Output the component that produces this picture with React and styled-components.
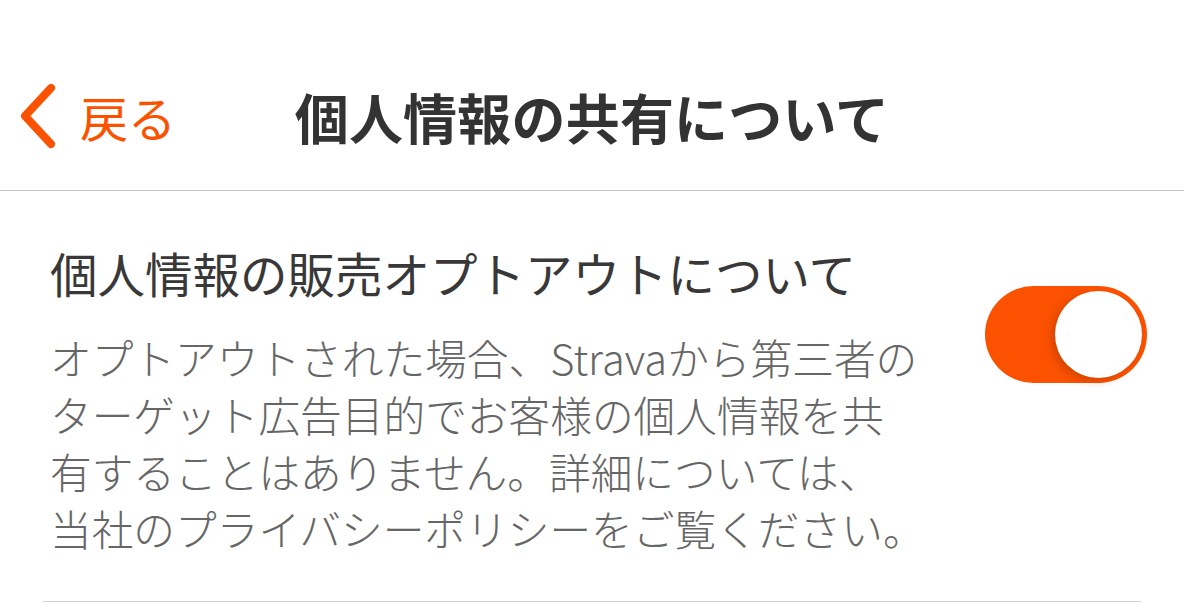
import React from "react";
import styled, { createGlobalStyle } from "styled-components";

const Global = createGlobalStyle`
  html, body { margin: 0; padding: 0; background: #fff; }
  body { font-family: "Noto Sans CJK JP", "Noto Sans", sans-serif; }
`;

const Page = styled.div`
  width: 1184px;
  height: 612px;
  overflow: hidden;
  background: #fff;
`;

const Header = styled.header`
  position: relative;
  height: 140px;
  padding-top: 50px;
  display: flex;
  align-items: center;
  justify-content: center;
  border-bottom: 1.5px solid #c4c4c4;
  box-sizing: content-box;
`;

const Back = styled.button`
  position: absolute;
  left: 16px;
  top: 46px;
  height: 140px;
  display: flex;
  align-items: center;
  gap: 22px;
  border: 0;
  background: none;
  padding: 0;
  color: #fc5200;
  font-family: inherit;
  font-size: 48px;
  font-weight: 400;
  cursor: pointer;
`;

const Title = styled.h1`
  margin: 0 0 8px;
  font-size: 54px;
  font-weight: 700;
  color: #333;
  letter-spacing: 0.2px;
`;

const Section = styled.section`
  margin: 0 43px;
  padding: 52px 0 44px 7px;
  display: flex;
  align-items: flex-start;
  justify-content: space-between;
  border-bottom: 1.5px solid #cfcfcf;
`;

const TextCol = styled.div`
  display: flex;
  flex-direction: column;
  gap: 26px;
`;

const SectionTitle = styled.h2`
  margin: 0;
  font-size: 47.5px;
  line-height: 60px;
  font-weight: 400;
  color: #383838;
  white-space: nowrap;
`;

const Body = styled.p`
  margin: 0;
  font-size: 41.7px;
  line-height: 57px;
  font-weight: 300;
  color: #666;
  white-space: nowrap;
`;

const Toggle = styled.div`
  margin-top: 43px;
  margin-right: -6px;
  width: 162px;
  height: 97px;
  border-radius: 49px;
  background: #fc5200;
  display: flex;
  align-items: center;
  justify-content: flex-end;
  padding: 0 5px;
  box-sizing: border-box;
  flex-shrink: 0;
`;

const Knob = styled.div`
  width: 87px;
  height: 87px;
  border-radius: 50%;
  background: #fff;
  box-shadow: -4px 3px 8px rgba(120, 40, 0, 0.3);
`;

export default function App() {
  return (
    <Page>
      <Global />
      <Header>
        <Back>
          <svg width="42" height="68" viewBox="0 0 42 68">
            <path
              d="M35 6 L9 34 L35 62"
              fill="none"
              stroke="#fc5200"
              strokeWidth="8"
              strokeLinecap="round"
              strokeLinejoin="round"
            />
          </svg>
          戻る
        </Back>
        <Title>個人情報の共有について</Title>
      </Header>
      <Section>
        <TextCol>
          <SectionTitle>個人情報の販売オプトアウトについて</SectionTitle>
          <Body>
            オプトアウトされた場合、Stravaから第三者の
            <br />
            ターゲット広告目的でお客様の個人情報を共
            <br />
            有することはありません。詳細については、
            <br />
            当社のプライバシーポリシーをご覧ください。
          </Body>
        </TextCol>
        <Toggle>
          <Knob />
        </Toggle>
      </Section>
    </Page>
  );
}
